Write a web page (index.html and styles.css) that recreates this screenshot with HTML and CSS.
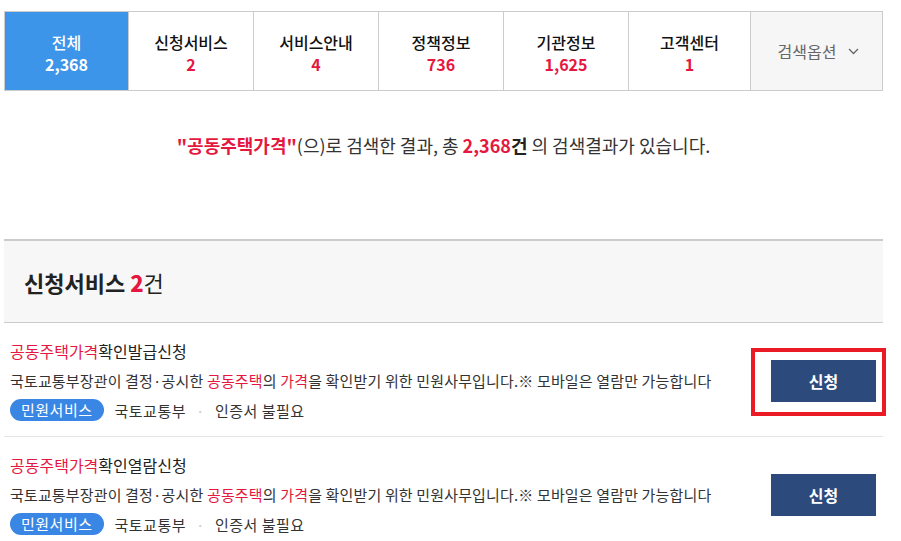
FILE: index.html
```html
<!DOCTYPE html>
<html>
<head>
    <title>통합검색</title>
    <meta charset="utf-8" />
    <link rel="stylesheet" href="styles.css">
</head>
<body>
    <div class="wrap">
        <ul class="tabs">
            <li class="tab on"><span class="tab-name">전체</span><span class="tab-num">2,368</span></li>
            <li class="tab"><span class="tab-name">신청서비스</span><span class="tab-num">2</span></li>
            <li class="tab"><span class="tab-name">서비스안내</span><span class="tab-num">4</span></li>
            <li class="tab"><span class="tab-name">정책정보</span><span class="tab-num">736</span></li>
            <li class="tab"><span class="tab-name">기관정보</span><span class="tab-num">1,625</span></li>
            <li class="tab"><span class="tab-name">고객센터</span><span class="tab-num">1</span></li>
            <li class="tab-opt">검색옵션
                <svg class="chev" width="11" height="7" viewBox="0 0 11 7"><path d="M1 1l4.5 4.5L10 1" fill="none" stroke="#666" stroke-width="1.3"/></svg>
            </li>
        </ul>

        <p class="summary"><b class="red">"공동주택가격"</b>(으)로 검색한 결과, 총 <b class="red">2,368</b><b>건</b> 의 검색결과가 있습니다.</p>

        <div class="section">
            <h2 class="sec-title">신청서비스 <b class="red">2</b><span class="cnt">건</span></h2>
        </div>

        <ul class="list">
            <li class="item">
                <div class="info">
                    <p class="title"><span class="red">공동주택가격</span>확인발급신청</p>
                    <p class="desc">국토교통부장관이 결정·공시한 <span class="red">공동주택</span>의 <span class="red">가격</span>을 확인받기 위한 민원사무입니다.※ 모바일은 열람만 가능합니다</p>
                    <p class="meta"><span class="tag">민원서비스</span><span>국토교통부</span><span class="dot">·</span><span>인증서 불필요</span></p>
                </div>
                <div class="btn-box">
                    <a class="btn" href="#">신청</a>
                    <span class="mark"></span>
                </div>
            </li>
            <li class="item">
                <div class="info">
                    <p class="title"><span class="red">공동주택가격</span>확인열람신청</p>
                    <p class="desc">국토교통부장관이 결정·공시한 <span class="red">공동주택</span>의 <span class="red">가격</span>을 확인받기 위한 민원사무입니다.※ 모바일은 열람만 가능합니다</p>
                    <p class="meta"><span class="tag">민원서비스</span><span>국토교통부</span><span class="dot">·</span><span>인증서 불필요</span></p>
                </div>
                <div class="btn-box">
                    <a class="btn" href="#">신청</a>
                </div>
            </li>
        </ul>
    </div>
</body>
</html>
```

FILE: styles.css
```css
html, body {
    margin: 0;
    padding: 0;
}

body {
    font-family: "Noto Sans CJK KR", "Noto Sans", sans-serif;
    color: #333;
    background: #fff;
    overflow: hidden;
}

p, ul, h2 {
    margin: 0;
    padding: 0;
}

ul {
    list-style: none;
}

.wrap {
    width: 879px;
    margin-left: 4px;
    padding-top: 11px;
}

.red {
    color: #e5173f;
}

/* tabs */
.tabs {
    display: flex;
    height: 80px;
    border: 1px solid #ccc;
    box-sizing: border-box;
}

.tab {
    width: 125px;
    border-right: 1px solid #ccc;
    box-sizing: border-box;
    display: flex;
    flex-direction: column;
    align-items: center;
    justify-content: center;
    padding-top: 3px;
}

.tab:first-child {
    width: 124px;
}

.tab:nth-child(6) {
    width: 122px;
}

.tab-name {
    font-size: 16px;
    font-weight: 500;
    line-height: 22px;
    color: #111;
}

.tab-num {
    font-size: 16px;
    font-weight: 700;
    line-height: 22px;
    color: #e5173f;
}

.tab.on {
    background: #3c95e8;
}

.tab.on .tab-name, .tab.on .tab-num {
    color: #fff;
}

.tab-opt {
    flex: 1;
    background: #f6f6f6;
    display: flex;
    align-items: center;
    justify-content: center;
    font-size: 16px;
    color: #666;
    padding-left: 4px;
}

.chev {
    margin-left: 12px;
}

/* summary */
.summary {
    text-align: center;
    font-size: 18px;
    line-height: 24px;
    margin-top: 42px;
    color: #333;
}

.summary b {
    color: #222;
}

.summary b.red {
    color: #e5173f;
}

/* section */
.section {
    margin-top: 82px;
    border-top: 2px solid #ccc;
    border-bottom: 1px solid #ccc;
    background: #f7f7f7;
    height: 81px;
    display: flex;
    align-items: center;
    padding-left: 20px;
}

.sec-title {
    font-size: 22px;
    font-weight: 700;
    color: #222;
}

.sec-title .cnt {
    font-weight: 400;
}

/* list */
.item {
    display: flex;
    align-items: center;
    padding: 17px 7px 15px 6px;
    border-bottom: 1px solid #e5e5e5;
}

.info {
    flex: 1;
}

.title {
    font-size: 16px;
    line-height: 22px;
    color: #222;
}

.desc {
    font-size: 15px;
    line-height: 22px;
    letter-spacing: 0.15px;
    margin-top: 8px;
    color: #333;
}

.meta {
    display: flex;
    align-items: center;
    margin-top: 7px;
    font-size: 15px;
    letter-spacing: 0.5px;
    color: #333;
    height: 22px;
}

.tag {
    display: inline-block;
    background: #3a86e4;
    color: #fff;
    border-radius: 11px;
    height: 22px;
    line-height: 22px;
    padding: 0 11px;
    margin-right: 11px;
}

.dot {
    color: #ccc;
    margin: 0 10px;
}

.btn-box {
    position: relative;
}

.btn {
    display: block;
    width: 105px;
    height: 42px;
    line-height: 42px;
    text-align: center;
    background: #2c4a7c;
    color: #fff;
    font-size: 16px;
    font-weight: 700;
    text-decoration: none;
}

.mark {
    position: absolute;
    left: -20px;
    top: -12px;
    width: 135px;
    height: 68px;
    border: 4px solid #ea1b24;
    box-sizing: border-box;
}
```
